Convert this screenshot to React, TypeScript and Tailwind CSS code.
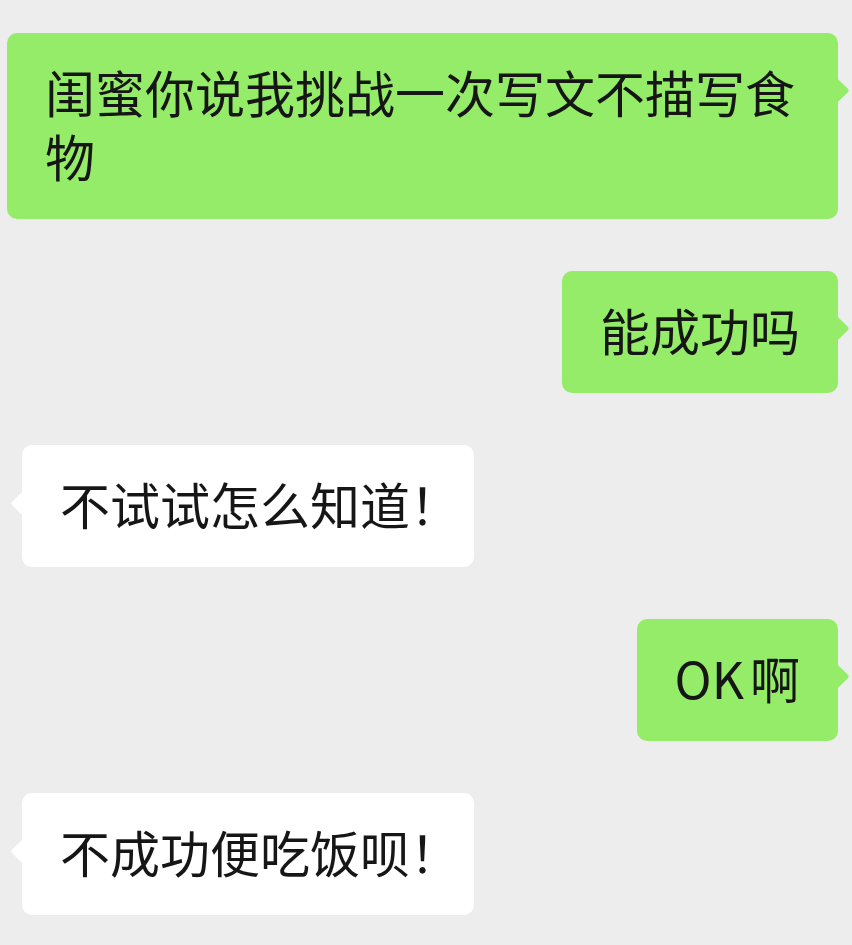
const messages = [
  { side: 'right', text: '闺蜜你说我挑战一次写文不描写食物' },
  { side: 'right', text: '能成功吗' },
  { side: 'left', text: '不试试怎么知道', bang: true },
  { side: 'right', text: 'OK', tail: '啊' },
  { side: 'left', text: '不成功便吃饭呗', bang: true },
];

function Bubble({ side, text, bang, tail }: { side: string; text: string; bang?: boolean; tail?: string }) {
  const mine = side === 'right';
  return (
    <div className={mine ? 'flex justify-end pr-[14px] pl-[7px]' : 'flex justify-start pl-[22px]'}>
      <div
        className={
          mine
            ? 'relative max-w-[831px] rounded-[10px] bg-[#95ec69] pl-[38px] pr-[38px] pt-[26px] pb-[32px]'
            : 'relative max-w-[831px] rounded-[10px] bg-white pl-[38px] pr-[14px] pt-[26px] pb-[32px]'
        }
      >
        {/* tail */}
        <span
          className={
            mine
              ? 'absolute top-[49px] -right-[8px] h-[17px] w-[17px] rotate-45 rounded-[2px] bg-[#95ec69]'
              : 'absolute top-[50px] -left-[8px] h-[17px] w-[17px] rotate-45 rounded-[2px] bg-white'
          }
        />
        <p
          className={
            bang
              ? 'relative whitespace-nowrap text-[50px] leading-[64px] text-[#161616]'
              : 'relative break-all text-[50px] leading-[64px] text-[#161616]'
          }
        >
          {text}
          {tail && <span className="ml-[6px]">{tail}</span>}
          {bang && '！'}
        </p>
      </div>
    </div>
  );
}

export default function App() {
  return (
    <div
      className="min-h-[945px] w-[852px] overflow-hidden bg-[#ededed] pt-[33px] flex flex-col gap-[52px]"
      style={{ fontFamily: '"Noto Sans CJK SC", "Noto Sans", sans-serif' }}
    >
      {messages.map((m, i) => (
        <Bubble key={i} side={m.side} text={m.text} bang={m.bang} tail={m.tail} />
      ))}
    </div>
  );
}
